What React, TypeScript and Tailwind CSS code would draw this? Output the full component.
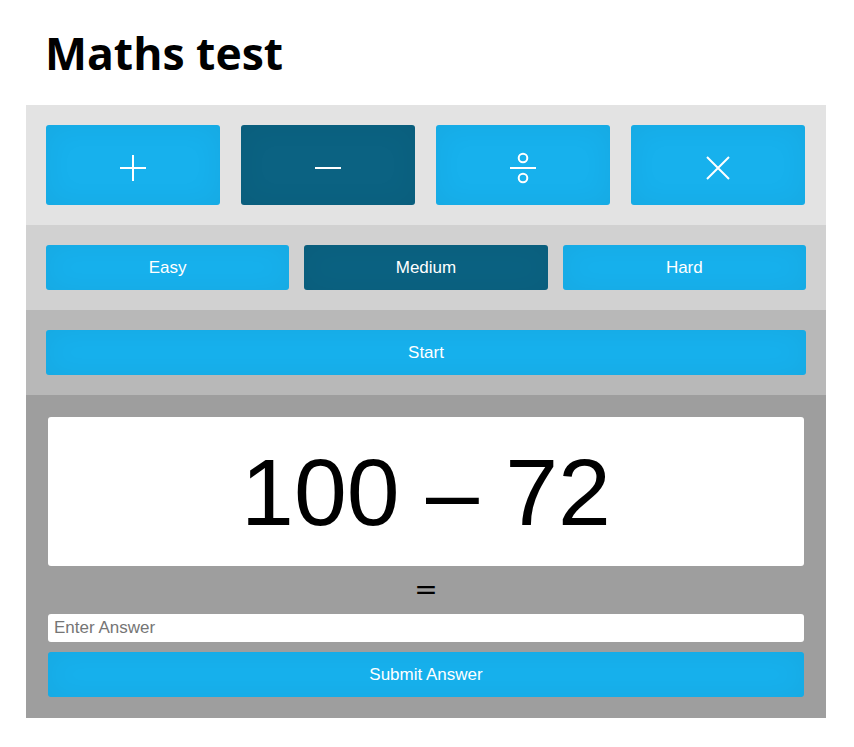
import React, { useState } from 'react';

type Op = 'add' | 'sub' | 'div' | 'mul';

function OpIcon({ op }: { op: Op }) {
  return (
    <svg width="30" height="30" viewBox="0 0 30 30" fill="none" stroke="white" strokeWidth={2} className="mt-[6px] overflow-visible">
      {op === 'add' && <path d="M2 15h26M15 2v26" />}
      {op === 'sub' && <path d="M2 15h26" />}
      {op === 'div' && (
        <>
          <path d="M2 15h26" />
          <circle cx="15" cy="5" r="4.3" />
          <circle cx="15" cy="25" r="4.3" />
        </>
      )}
      {op === 'mul' && <path d="M4 4l22 22M26 4L4 26" />}
    </svg>
  );
}

const btn = 'rounded-[3px] text-white shadow-[inset_0_0_30px_rgba(0,0,0,0.05)] flex items-center justify-center';

export default function App() {
  const [op, setOp] = useState<Op>('sub');
  const [level, setLevel] = useState('Medium');
  const [answer, setAnswer] = useState('');

  const ops: Op[] = ['add', 'sub', 'div', 'mul'];

  return (
    <div className="bg-white min-h-screen pl-[26px] pt-[24px] font-['Liberation_Sans',Arial,sans-serif]">
      <h1 className="pl-[19px] text-[44.5px] leading-[58px] font-bold text-black font-['Open_Sans',sans-serif] mb-[23px]">
        Maths test
      </h1>

      <div className="w-[800px]">
        <div className="bg-[#e3e3e3] p-5 grid grid-cols-4 gap-[21px] pr-[21px]">
          {ops.map((o) => (
            <button
              key={o}
              onClick={() => setOp(o)}
              className={`${btn} h-20 ${op === o ? 'bg-[#0b6282]' : 'bg-[#17b1ed]'}`}
            >
              <OpIcon op={o} />
            </button>
          ))}
        </div>

        <div className="bg-[#d1d1d1] p-5 grid grid-cols-3 gap-[15px]">
          {['Easy', 'Medium', 'Hard'].map((l) => (
            <button
              key={l}
              onClick={() => setLevel(l)}
              className={`${btn} h-[45px] text-[17px] ${level === l ? 'bg-[#0b6282]' : 'bg-[#17b1ed]'}`}
            >
              {l}
            </button>
          ))}
        </div>

        <div className="bg-[#b8b8b8] p-5">
          <button className={`${btn} w-full h-[45px] text-[17px] bg-[#17b1ed]`}>Start</button>
        </div>

        <div className="bg-[#9e9e9e] px-[22px] pt-[22px] pb-[21px] flex flex-col">
          <div className="bg-white rounded-[3px] h-[149px] flex items-center justify-center text-[95px] leading-none text-black pt-[2px]">
            100 – 72
          </div>
          <div className="text-center text-[28px] leading-none h-[48px] flex items-center justify-center font-['DejaVu_Sans',sans-serif]">
            =
          </div>
          <input
            value={answer}
            onChange={(e) => setAnswer(e.target.value)}
            placeholder="Enter Answer"
            className="bg-white rounded-[3px] h-[28px] px-[6px] text-[17px] text-black placeholder:text-[#757575] outline-none"
          />
          <button className={`${btn} mt-[10px] w-full h-[45px] text-[17px] bg-[#17b1ed]`}>Submit Answer</button>
        </div>
      </div>
    </div>
  );
}
